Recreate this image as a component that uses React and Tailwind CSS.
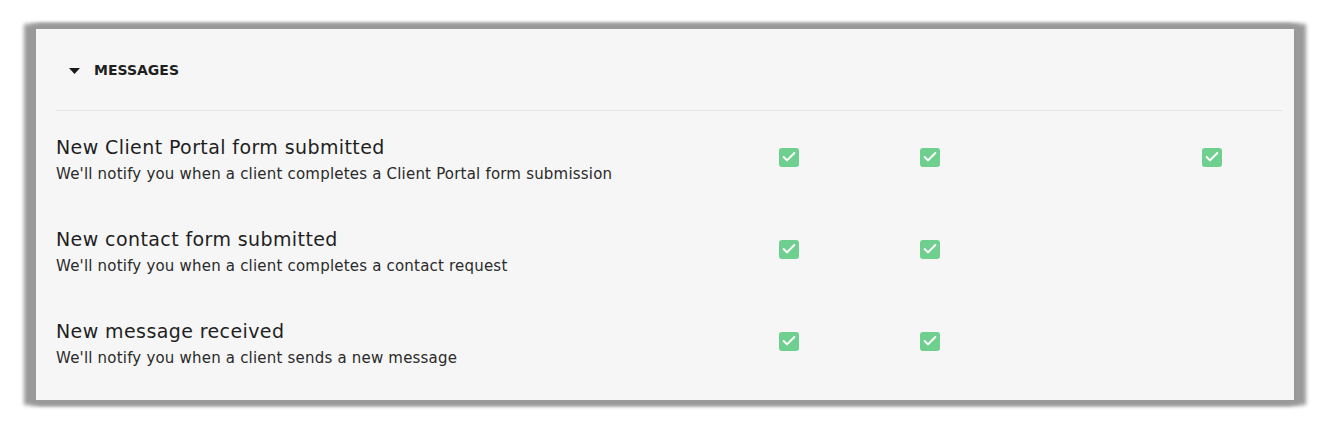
import { Check } from 'lucide-react';

const rows = [
  {
    title: 'New Client Portal form submitted',
    desc: "We'll notify you when a client completes a Client Portal form submission",
    checks: [true, true, false, true],
  },
  {
    title: 'New contact form submitted',
    desc: "We'll notify you when a client completes a contact request",
    checks: [true, true, false, false],
  },
  {
    title: 'New message received',
    desc: "We'll notify you when a client sends a new message",
    checks: [true, true, false, false],
  },
];

function CheckBox() {
  return (
    <div className="w-[20px] h-[19px] rounded-[3px] bg-[#6fcf8f] flex items-center justify-center">
      <Check size={16} strokeWidth={3} className="text-white" />
    </div>
  );
}

export default function App() {
  return (
    <div className="w-[1334px] h-[428px] bg-white pt-[29px] pl-[36px] pr-[40px] font-['DejaVu_Sans',sans-serif]">
      <div className="w-[1258px] h-[371px] bg-[#f6f6f6] pl-[20px] pr-[11px] shadow-[0_0_4px_5px_#9a9a9a,-7px_0_4px_5px_#9a9a9a,7px_0_4px_5px_#9a9a9a]">
        <div className="h-[82px] flex items-center pl-[13px] pt-[2px] border-b border-[#e6e6e6]">
          <svg width="11" height="6" viewBox="0 0 11 6" className="mr-[14px]">
            <path d="M0 0 H11 L5.5 6 Z" fill="#1a1a1a" />
          </svg>
          <span className="text-[14px] font-semibold text-[#1f1f1f]">MESSAGES</span>
        </div>
        {rows.map((row) => (
          <div key={row.title} className="h-[92px] grid grid-cols-[1fr_141px_141px_141px_141px] items-center">
            <div className="flex flex-col pt-[4px]">
              <span className="text-[19px] leading-[24px] tracking-[0.4px] text-[#1f1f1f]">{row.title}</span>
              <span className="text-[15px] leading-[20px] tracking-[0.2px] text-[#2a2a2a] mt-[5px]">{row.desc}</span>
            </div>
            {row.checks.map((c, i) => (
              <div key={i} className="flex justify-center pr-[2px]">
                {c && <CheckBox />}
              </div>
            ))}
          </div>
        ))}
      </div>
    </div>
  );
}
